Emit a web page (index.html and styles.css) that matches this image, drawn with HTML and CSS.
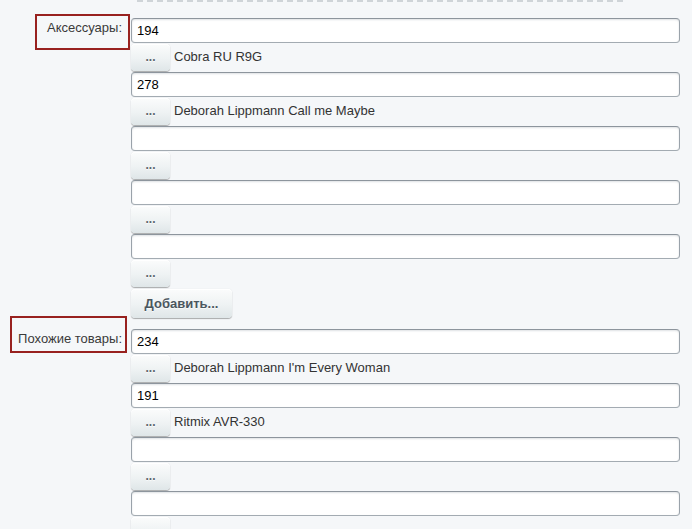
FILE: index.html
```html
<!DOCTYPE html>
<html lang="ru">
<head>
<meta charset="utf-8">
<title>Связанные товары</title>
<link rel="stylesheet" href="styles.css">
</head>
<body>
<div class="divider"></div>
<div class="form">
  <div class="field-label">
    <span>Аксессуары:</span>
    <div class="mark mark-a"></div>
  </div>
  <div class="field-body">
    <div class="item">
      <input class="item-input" type="text" value="194">
      <div class="item-row"><button class="btn pick-btn">...</button><span class="item-name">Cobra RU R9G</span></div>
    </div>
    <div class="item">
      <input class="item-input" type="text" value="278">
      <div class="item-row"><button class="btn pick-btn">...</button><span class="item-name">Deborah Lippmann Call me Maybe</span></div>
    </div>
    <div class="item">
      <input class="item-input" type="text" value="">
      <div class="item-row"><button class="btn pick-btn">...</button><span class="item-name"></span></div>
    </div>
    <div class="item">
      <input class="item-input" type="text" value="">
      <div class="item-row"><button class="btn pick-btn">...</button><span class="item-name"></span></div>
    </div>
    <div class="item">
      <input class="item-input" type="text" value="">
      <div class="item-row"><button class="btn pick-btn">...</button><span class="item-name"></span></div>
    </div>
    <button class="btn add-btn">Добавить...</button>
  </div>

  <div class="field-label">
    <span>Похожие товары:</span>
    <div class="mark mark-b"></div>
  </div>
  <div class="field-body">
    <div class="item">
      <input class="item-input" type="text" value="234">
      <div class="item-row"><button class="btn pick-btn">...</button><span class="item-name">Deborah Lippmann I'm Every Woman</span></div>
    </div>
    <div class="item">
      <input class="item-input" type="text" value="191">
      <div class="item-row"><button class="btn pick-btn">...</button><span class="item-name">Ritmix AVR-330</span></div>
    </div>
    <div class="item">
      <input class="item-input" type="text" value="">
      <div class="item-row"><button class="btn pick-btn">...</button><span class="item-name"></span></div>
    </div>
    <div class="item">
      <input class="item-input" type="text" value="">
      <div class="item-row"><button class="btn pick-btn">...</button><span class="item-name"></span></div>
    </div>
  </div>
</div>
</body>
</html>
```

FILE: styles.css
```css
html, body {
  margin: 0;
  padding: 0;
}

body {
  background: #f5f7f9;
  font-family: "Liberation Sans", Arial, sans-serif;
  font-size: 13px;
  color: #333;
  overflow: hidden;
}

.divider {
  margin-left: 137px;
  width: 486px;
  height: 0;
  border-top: 2px dashed #cfd4d8;
}

.form {
  display: grid;
  grid-template-columns: 131px 549px;
  row-gap: 11px;
  margin-top: 16px;
}

.field-label {
  position: relative;
  text-align: right;
  padding-right: 9px;
  padding-top: 2px;
  line-height: 15px;
  color: #3a3a3a;
}

/* red outline drawn around a field caption */
.mark {
  position: absolute;
  border: 2px solid #98211f;
  box-sizing: border-box;
}

.mark-a {
  left: 35px;
  top: -4px;
  width: 95px;
  height: 36px;
}

.mark-b {
  left: 10px;
  top: -13px;
  width: 117px;
  height: 37px;
}

.field-body {
  display: flex;
  flex-direction: column;
  align-items: flex-start;
}

.item {
  width: 100%;
}

.item-input {
  display: block;
  width: 100%;
  height: 25px;
  box-sizing: border-box;
  margin: 0 0 1px 0;
  padding: 0 5px;
  background: #fff;
  border: 1px solid;
  border-color: #8d959d #9aa2aa #a3abb2 #9aa2aa;
  border-radius: 4px;
  box-shadow: inset 0 1px 2px rgba(160, 170, 175, 0.35);
  font-family: "Liberation Sans", Arial, sans-serif;
  font-size: 13px;
  color: #000;
  outline: none;
}

.item-row {
  display: flex;
  align-items: flex-start;
  gap: 4px;
  height: 28px;
}

.btn {
  display: inline-block;
  box-sizing: border-box;
  border: none;
  border-radius: 4px;
  background: linear-gradient(to bottom, #fbfcfc 0%, #eef2f3 55%, #dfe6e8 100%);
  box-shadow: 0 0 1px rgba(0, 0, 0, 0.15), 0 1px 1px rgba(0, 0, 0, 0.3), inset 0 1px 0 #fff;
  font-family: "Liberation Sans", Arial, sans-serif;
  font-weight: bold;
  font-size: 13px;
  color: #4b565e;
  text-shadow: 0 1px rgba(255, 255, 255, 0.7);
  cursor: pointer;
  padding: 0;
}

.pick-btn {
  width: 39px;
  height: 27px;
  line-height: 27px;
  font-size: 12px;
  color: #5c666d;
}

.item-name {
  padding-top: 5px;
  line-height: 15px;
  color: #333;
}

.add-btn {
  margin-top: 1px;
  width: 101px;
  height: 29px;
  padding: 0 12px;
}
```
